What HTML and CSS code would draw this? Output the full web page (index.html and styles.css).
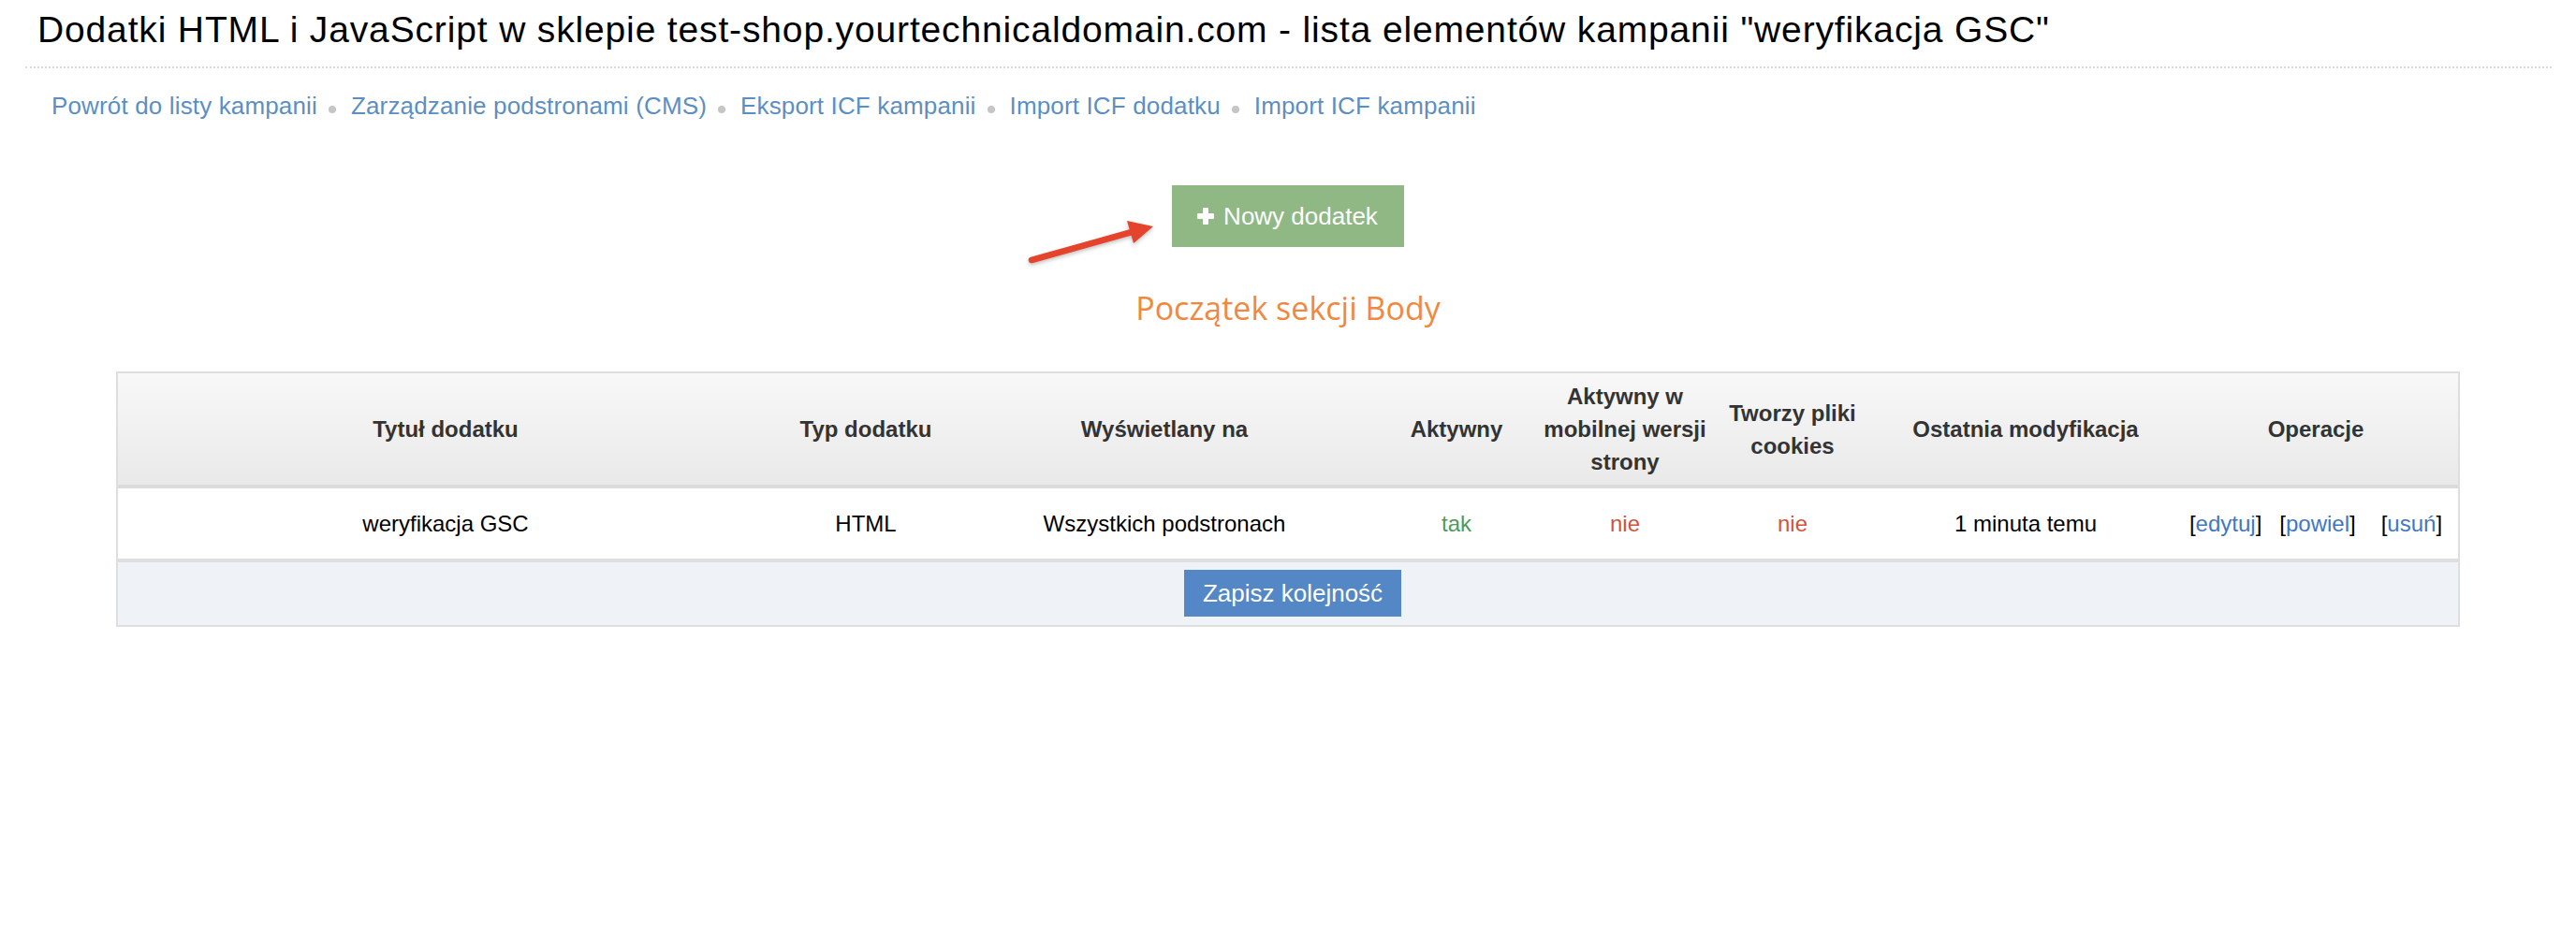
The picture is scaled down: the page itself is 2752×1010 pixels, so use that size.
FILE: index.html
```html
<!DOCTYPE html>
<html lang="pl">
<head>
<meta charset="utf-8">
<title>Dodatki HTML i JavaScript</title>
<link rel="stylesheet" href="styles.css">
</head>
<body>
<div class="page">
  <header class="page-head">
    <h1 class="title">Dodatki HTML i JavaScript w sklepie test-shop.yourtechnicaldomain.com - lista elementów kampanii "weryfikacja GSC"</h1>
  </header>
  <nav class="crumbs"><a href="#">Powrót do listy kampanii</a><span class="dot"></span><a href="#">Zarządzanie podstronami (CMS)</a><span class="dot"></span><a href="#">Eksport ICF kampanii</a><span class="dot"></span><a href="#">Import ICF dodatku</a><span class="dot"></span><a href="#">Import ICF kampanii</a></nav>
  <div class="actions">
    <div class="btn-wrap">
      <svg class="arrow" width="145" height="55" viewBox="0 0 145 55" xmlns="http://www.w3.org/2000/svg">
        <line x1="7" y1="48" x2="114" y2="18" stroke="#e5432b" stroke-width="6.5" stroke-linecap="round"/>
        <polygon points="109,6 137,12 116,30" fill="#e5432b"/>
      </svg>
      <a class="btn-add" href="#"><svg class="plus" width="20" height="20" viewBox="0 0 20 20" xmlns="http://www.w3.org/2000/svg"><rect x="7" y="1" width="6" height="18" rx="1" fill="#fff"/><rect x="1" y="7" width="18" height="6" rx="1" fill="#fff"/></svg>Nowy dodatek</a>
    </div>
  </div>
  <h2 class="section">Początek sekcji Body</h2>
  <table class="grid">
    <colgroup>
      <col class="w1"><col class="w2"><col class="w3"><col class="w4"><col class="w5"><col class="w6"><col class="w7"><col class="w8">
    </colgroup>
    <thead>
      <tr>
        <th>Tytuł dodatku</th>
        <th>Typ dodatku</th>
        <th>Wyświetlany na</th>
        <th>Aktywny</th>
        <th>Aktywny w mobilnej wersji strony</th>
        <th>Tworzy pliki cookies</th>
        <th>Ostatnia modyfikacja</th>
        <th>Operacje</th>
      </tr>
    </thead>
    <tbody>
      <tr class="row">
        <td>weryfikacja GSC</td>
        <td>HTML</td>
        <td>Wszystkich podstronach</td>
        <td class="yes">tak</td>
        <td class="no">nie</td>
        <td class="no">nie</td>
        <td>1 minuta temu</td>
        <td class="ops"><span class="op">[<a href="#">edytuj</a>]</span><span class="op op2">[<a href="#">powiel</a>]</span><span class="op op3">[<a href="#">usuń</a>]</span></td>
      </tr>
      <tr class="foot">
        <td colspan="8"><a class="btn-save" href="#">Zapisz kolejność</a></td>
      </tr>
    </tbody>
  </table>
</div>
</body>
</html>
```
FILE: styles.css
```css
html, body {
  margin: 0;
  padding: 0;
  background: #fff;
}

body {
  font-family: "Liberation Sans", Arial, Helvetica, sans-serif;
  color: #000;
}

.page-head {
  margin: 0 26px 0 27px;
  padding: 10px 0 17px 13px;
  border-bottom: 2px dotted #dcdcdc;
}

.title {
  margin: 0;
  font-size: 39px;
  line-height: 44px;
  letter-spacing: 0.85px;
  font-weight: normal;
  color: #000;
  white-space: nowrap;
}

.crumbs {
  margin: 22px 0 0 55px;
  font-size: 26px;
  line-height: 36px;
  letter-spacing: 0.15px;
  white-space: nowrap;
}

.crumbs a {
  color: #5b8fc3;
  text-decoration: none;
}

.dot {
  display: inline-block;
  width: 8px;
  height: 8px;
  border-radius: 50%;
  background: #c6c6c6;
  margin: 0 16px 0 12px;
  vertical-align: 1px;
}

.actions {
  margin-top: 67px;
  display: flex;
  justify-content: center;
}

.btn-wrap {
  position: relative;
}

.arrow {
  position: absolute;
  left: -157px;
  top: 32px;
  filter: drop-shadow(0 2px 2px rgba(0, 0, 0, 0.25));
}

.btn-add {
  display: flex;
  align-items: center;
  background: #8fb885;
  color: #fff;
  text-decoration: none;
  font-size: 26px;
  line-height: 30px;
  padding: 18px 28px 18px 26px;
}

.plus {
  display: block;
  margin-right: 9px;
  margin-top: -1px;
}

.section {
  margin: 42px 0 0;
  text-align: center;
  font-family: "Open Sans", "Noto Sans", sans-serif;
  font-weight: normal;
  font-size: 34px;
  line-height: 46px;
  color: #f0893f;
}

.grid {
  margin: 45px 124px 0;
  width: calc(100% - 248px);
  table-layout: fixed;
  border-collapse: separate;
  border-spacing: 0;
  border: 2px solid #dedede;
}

.w1 { width: 700px; }
.w2 { width: 198px; }
.w3 { width: 440px; }
.w4 { width: 184px; }
.w5 { width: 176px; }
.w6 { width: 182px; }
.w7 { width: 316px; }
.w8 { width: 304px; }

.grid th {
  padding: 7px 0;
  font-size: 24px;
  line-height: 35px;
  font-weight: bold;
  color: #333;
  text-align: center;
  vertical-align: middle;
  background: linear-gradient(#f8f8f8, #e9e9e9);
  border-bottom: 4px solid #dcdcdc;
}

.row td {
  padding: 20px 0;
  font-size: 24px;
  line-height: 35px;
  color: #000;
  text-align: center;
  vertical-align: middle;
  background: #fff;
  border-bottom: 4px solid #dedede;
  white-space: nowrap;
}

.row .yes {
  color: #4f9a5a;
}

.row .no {
  color: #d1533c;
}

.ops a {
  color: #3f78c1;
  text-decoration: none;
}

.op2 {
  margin-left: 19px;
}

.op3 {
  margin-left: 27px;
}

.foot td {
  padding: 8px 0 9px;
  background: #eff2f7;
  text-align: center;
  font-size: 0;
  line-height: 0;
}

.btn-save {
  display: inline-block;
  margin-left: 10px;
  padding: 10px 20px;
  background: #5487c6;
  color: #fff;
  text-decoration: none;
  font-size: 26px;
  line-height: 30px;
}
```
